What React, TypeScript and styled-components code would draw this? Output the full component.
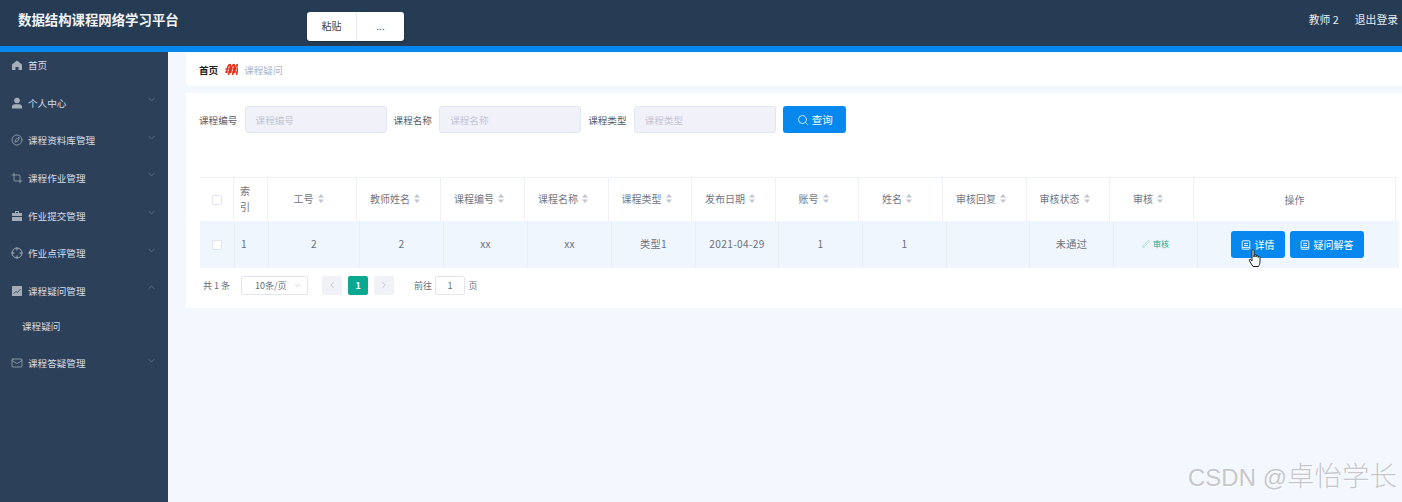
import React from "react";
import styled, { createGlobalStyle } from "styled-components";
import { ChevronDown, ChevronLeft, ChevronRight, ChevronUp, Compass, Crop, Mail, Pen, Search } from "lucide-react";

const GlobalStyle = createGlobalStyle`
  html, body {
    margin: 0;
    padding: 0;
    background: #f3f7fe;
  }
  body {
    font-family: "Noto Sans CJK SC", "Liberation Sans", sans-serif;
    overflow: hidden;
  }
`;

const Page = styled.div`
  position: relative;
  width: 1402px;
  height: 502px;
  overflow: hidden;
`;

const Header = styled.header`
  display: flex;
  align-items: flex-start;
  justify-content: space-between;
  height: 46px;
  padding: 0 4px 0 18px;
  background: #263c54;
  border-bottom: 6px solid #0688ee;
  color: #e6ecf2;
`;

const Title = styled.h1`
  margin: 9px 0 0;
  font-size: 13.4px;
  line-height: 20px;
  font-weight: 700;
  color: #f1f4f7;
`;

const UserBox = styled.div`
  display: flex;
  gap: 16px;
  margin-top: 11px;
  font-size: 10.8px;
  line-height: 16px;
`;

const PastePopup = styled.div`
  position: absolute;
  left: 307px;
  top: 12px;
  display: flex;
  width: 97px;
  height: 29px;
  background: #fff;
  border-radius: 3px;
  box-shadow: 0 1px 2px rgba(0, 0, 0, 0.25);
`;

const PasteItem = styled.div<{ $w: number; $line?: boolean }>`
  display: flex;
  align-items: center;
  justify-content: center;
  box-sizing: border-box;
  width: ${(p) => p.$w}px;
  padding-bottom: 2px;
  font-size: 10px;
  color: #444;
  border-right: ${(p) => (p.$line ? "1px solid #e8ebf2" : "none")};
`;

const Body = styled.div`
  display: flex;
  height: 450px;
`;

const Sidebar = styled.nav`
  flex: none;
  width: 168px;
  background: #2c4059;
  color: #d6dee7;
`;

const MenuItem = styled.div<{ $first?: boolean }>`
  display: flex;
  align-items: center;
  height: ${(p) => (p.$first ? 25 : 37.6)}px;
  margin-bottom: ${(p) => (p.$first ? 7 : 0)}px;
  padding: 0 11.5px 0 11px;
  font-size: 9.6px;
  svg.lead {
    flex: none;
    width: 12px;
    height: 12px;
    margin-right: 5px;
    color: #a4adb8;
  }
  svg.arrow {
    width: 11px;
    height: 11px;
    margin-left: auto;
    margin-top: -6px;
    color: #5f7186;
  }
`;

const SubItem = styled.div`
  display: flex;
  align-items: center;
  box-sizing: border-box;
  height: 35px;
  padding: 0 0 2px 22px;
  font-size: 9.6px;
`;

const Main = styled.main`
  flex: 1;
  min-width: 0;
  padding: 1px 0 0 18px;
`;

const Crumbs = styled.div`
  display: flex;
  align-items: center;
  gap: 6px;
  height: 33px;
  padding-left: 13px;
  background: #fff;
  border-radius: 0 0 0 4px;
  font-size: 9.6px;
`;

const CrumbHome = styled.span`
  color: #222;
  font-weight: 700;
`;

const CrumbCurrent = styled.span`
  color: #a9b4c8;
`;

const CrumbMark = styled.svg`
  width: 13px;
  height: 13px;
  margin-left: 1px;
`;

const Card = styled.section`
  height: 215px;
  margin-top: 7px;
  padding: 13px 3px 0 13px;
  background: #fff;
  box-sizing: border-box;
`;

const SearchRow = styled.div`
  display: flex;
  align-items: center;
  height: 27px;
`;

const Field = styled.label`
  display: flex;
  align-items: center;
  gap: 7.2px;
  margin-right: 7px;
  font-size: 9.6px;
  color: #555d6b;
`;

const FieldInput = styled.div`
  display: flex;
  align-items: center;
  box-sizing: border-box;
  width: 142px;
  height: 27px;
  padding-left: 10px;
  background: #f1f1f9;
  border: 1px solid #e3e6f3;
  border-radius: 3px;
  font-size: 9.6px;
  color: #c3c6d6;
`;

const PrimaryButton = styled.button`
  display: inline-flex;
  align-items: center;
  justify-content: center;
  gap: 3px;
  border: none;
  border-radius: 3px;
  background: #0688ee;
  color: #fff;
  font-family: inherit;
  font-size: 10px;
  padding: 0;
  svg {
    width: 12px;
    height: 12px;
  }
`;

const SearchButton = styled(PrimaryButton)`
  width: 63px;
  height: 27px;
  margin-left: 0.6px;
  font-size: 10.5px;
`;

const Table = styled.div`
  width: 1199px;
  margin: 44px 0 0 1px;
  font-size: 10px;
`;

const HeadRow = styled.div`
  display: grid;
  grid-template-columns: 34px 34px 89px 84px 84px 84px 83px 84px 83px 84px 84px 83px 84px 202px;
  height: 44px;
  border-top: 1px solid #eef1f8;
  box-sizing: border-box;
`;

const BodyRow = styled.div`
  display: grid;
  grid-template-columns: 35px 34px 91px 84px 84px 84px 84px 83px 84px 84px 83px 84px 84px 201px;
  height: 47px;
  background: #f0f6fe;
`;

const HeadCell = styled.div<{ $plain?: boolean }>`
  display: flex;
  align-items: center;
  justify-content: center;
  gap: 4px;
  box-sizing: border-box;
  padding: 0 ${(p) => (p.$plain ? 0 : 7)}px ${(p) => (p.$plain ? 1 : 3)}px 0;
  color: #6f7785;
  border-right: 1px solid #eef1f8;
`;

const IndexHead = styled(HeadCell)`
  justify-content: flex-start;
  padding: 0 0 1px 6px;
  line-height: 16px;
`;

const Cell = styled.div`
  display: flex;
  align-items: center;
  justify-content: center;
  padding-bottom: 2px;
  color: #6b7280;
  border-right: 1px solid #e8eff9;
  font-size: 10.2px;
  letter-spacing: 0.3px;
`;

const IndexCell = styled(Cell)`
  justify-content: flex-start;
  padding-left: 6px;
`;

const ActionCell = styled(Cell)`
  gap: 5px;
  border-right: none;
  padding: 0 3px 0 0;
  letter-spacing: 0;
`;

const Box = styled.span`
  display: block;
  box-sizing: border-box;
  width: 10px;
  height: 10px;
  margin-top: 2px;
  background: #fff;
  border: 1px solid #e3e6ef;
  border-radius: 1px;
`;

const Sort = styled.svg`
  width: 6px;
  height: 9px;
  flex: none;
`;

const AuditLink = styled.span`
  display: inline-flex;
  align-items: center;
  gap: 3px;
  font-size: 8px;
  letter-spacing: 0;
  color: #1aa88f;
  svg {
    width: 8px;
    height: 8px;
    color: #6fc9b8;
  }
`;

const RowButton = styled(PrimaryButton)<{ $w: number }>`
  width: ${(p) => p.$w}px;
  height: 27px;
  gap: 4px;
  svg {
    width: 10px;
    height: 10px;
  }
`;

const Pager = styled.div`
  display: flex;
  align-items: center;
  height: 20px;
  margin-top: 7px;
  padding-left: 3px;
  font-size: 9px;
  color: #666e7c;
`;

const PageSelect = styled.div`
  display: flex;
  align-items: center;
  justify-content: space-between;
  box-sizing: border-box;
  width: 67px;
  height: 19px;
  margin: 0 14px 0 11px;
  padding: 0 5px 0 13px;
  border: 1px solid #e3e6ef;
  border-radius: 2px;
  svg {
    width: 9px;
    height: 9px;
    color: #c3c8d2;
  }
`;

const PageButton = styled.div<{ $active?: boolean }>`
  display: flex;
  align-items: center;
  justify-content: center;
  width: 20px;
  height: 19px;
  margin-right: 6px;
  border-radius: 2px;
  font-weight: 700;
  background: ${(p) => (p.$active ? "#0aa98f" : "#f0f2f8")};
  color: ${(p) => (p.$active ? "#fff" : "#b9bfcc")};
  svg {
    width: 10px;
    height: 10px;
  }
`;

const JumpLabel = styled.span`
  margin-left: 14px;
`;

const JumpInput = styled.div`
  display: flex;
  align-items: center;
  justify-content: center;
  box-sizing: border-box;
  width: 30px;
  height: 19px;
  margin: 0 3.5px 0 3px;
  border: 1px solid #e3e6ef;
  border-radius: 2px;
`;

const Watermark = styled.div`
  position: absolute;
  right: 5px;
  top: 456px;
  display: flex;
  align-items: baseline;
  font-family: "Liberation Sans", "Noto Sans CJK SC", sans-serif;
  font-size: 24px;
  line-height: 36px;
  color: rgba(165, 165, 168, 0.6);
  text-shadow: 1px 1px 1px rgba(255, 255, 255, 0.9);
  white-space: pre;
`;

const WatermarkName = styled.span`
  font-family: "Noto Sans CJK SC", sans-serif;
  font-size: 27.5px;
  font-weight: 300;
`;

const HandCursor = styled.svg`
  position: absolute;
  left: 1248px;
  top: 249px;
  width: 14px;
  height: 20px;
`;

const SortIcon = () => (
  <Sort viewBox="0 0 6 9">
    <path d="M3 0 6 3.4H0Z" fill="#c0c6d2" />
    <path d="M3 9 0 5.6H6Z" fill="#c0c6d2" />
  </Sort>
);

const HomeIcon = () => (
  <svg className="lead" viewBox="0 0 12 12" fill="#a4adb8">
    <path d="M6 1.500 11 5.500V11H7.500V8h-3v3H1V5.500Z" />
  </svg>
);

const PersonIcon = () => (
  <svg className="lead" viewBox="0 0 12 12" fill="#a4adb8">
    <circle cx="6" cy="3.500" r="2.800" />
    <path d="M1 11.500V9.500C1 7.800 2.500 7.200 6 7.200s5 .6 5 2.300v2Z" />
  </svg>
);

const CaseIcon = () => (
  <svg className="lead" viewBox="0 0 12 12" fill="#a4adb8">
    <path d="M4 1h4v2H7V2H5v1H4Z" />
    <path d="M1 3h10v3H1ZM1 7h10v4H1Z" />
  </svg>
);

const DataIcon = () => (
  <svg className="lead" viewBox="0 0 12 12">
    <rect x="1" y="1" width="10" height="10" rx="0.5" fill="#a4adb8" />
    <path d="M2.500 8.500 5 6.500l1.500 1L9.500 4" stroke="#2c4059" strokeWidth="0.8" fill="none" />
  </svg>
);

const AimIcon = () => (
  <svg className="lead" viewBox="0 0 12 12" fill="none" stroke="#a4adb8" strokeWidth="1">
    <circle cx="6" cy="6" r="5" />
    <path d="M6 .5v3M6 8.500v3M.5 6h3M8.500 6h3" />
  </svg>
);

const DocIcon = () => (
  <svg viewBox="0 0 10 10" fill="none" stroke="#fff" strokeWidth="0.9">
    <rect x="1.200" y="0.800" width="7.600" height="8.400" rx="0.600" />
    <path d="M3 3.400h4M3 5.400h4M1.200 7.400h7.600" />
  </svg>
);

const menu: { label: string; icon: React.ReactNode; open?: boolean }[] = [
  { label: "个人中心", icon: <PersonIcon /> },
  { label: "课程资料库管理", icon: <Compass className="lead" strokeWidth={1.5} /> },
  { label: "课程作业管理", icon: <Crop className="lead" strokeWidth={1.5} /> },
  { label: "作业提交管理", icon: <CaseIcon /> },
  { label: "作业点评管理", icon: <AimIcon /> },
  { label: "课程疑问管理", icon: <DataIcon />, open: true },
];

const headers = ["工号", "教师姓名", "课程编号", "课程名称", "课程类型", "发布日期", "账号", "姓名", "审核回复", "审核状态", "审核"];
const values = ["2", "2", "xx", "xx", "类型1", "2021-04-29", "1", "1", "", "未通过"];
const fields = ["课程编号", "课程名称", "课程类型"];

export default function App() {
  return (
    <Page>
      <GlobalStyle />
      <Header>
        <Title>数据结构课程网络学习平台</Title>
        <UserBox>
          <span>教师 2</span>
          <span>退出登录</span>
        </UserBox>
      </Header>
      <PastePopup>
        <PasteItem $w={50} $line>粘贴</PasteItem>
        <PasteItem $w={47}>...</PasteItem>
      </PastePopup>
      <Body>
        <Sidebar>
          <MenuItem $first>
            <HomeIcon />
            首页
          </MenuItem>
          {menu.map((m) => (
            <MenuItem key={m.label}>
              {m.icon}
              {m.label}
              {m.open ? <ChevronUp className="arrow" /> : <ChevronDown className="arrow" />}
            </MenuItem>
          ))}
          <SubItem>课程疑问</SubItem>
          <MenuItem>
            <Mail className="lead" strokeWidth={1.5} />
            课程答疑管理
            <ChevronDown className="arrow" />
          </MenuItem>
        </Sidebar>
        <Main>
          <Crumbs>
            <CrumbHome>首页</CrumbHome>
            <CrumbMark viewBox="0 0 13 13" fill="none" stroke="#e2301c" strokeWidth="1.500">
              <path d="M1 10c1-1 1-3 1.500-5S4 1.500 5 1.500 4.500 8 3.500 12M5 10c1-1 1-3 1.500-5S8 1.500 9 1.500 8.500 8 7.500 12M9 10c1-1 1-3 1.500-5S12 1.500 13 1.500 12.500 8 11.500 12" />
              <path d="M0 6h13M0 9h12" strokeWidth="1.200" />
            </CrumbMark>
            <CrumbCurrent>课程疑问</CrumbCurrent>
          </Crumbs>
          <Card>
            <SearchRow>
              {fields.map((f) => (
                <Field key={f}>
                  {f}
                  <FieldInput>{f}</FieldInput>
                </Field>
              ))}
              <SearchButton>
                <Search strokeWidth={1.5} />
                查询
              </SearchButton>
            </SearchRow>
            <Table>
              <HeadRow>
                <HeadCell $plain><Box /></HeadCell>
                <IndexHead>索<br />引</IndexHead>
                {headers.map((h) => (
                  <HeadCell key={h}>
                    {h}
                    <SortIcon />
                  </HeadCell>
                ))}
                <HeadCell $plain>操作</HeadCell>
              </HeadRow>
              <BodyRow>
                <Cell><Box /></Cell>
                <IndexCell>1</IndexCell>
                {values.map((v, i) => (
                  <Cell key={i}>{v}</Cell>
                ))}
                <Cell>
                  <AuditLink>
                    <Pen strokeWidth={1.5} />
                    审核
                  </AuditLink>
                </Cell>
                <ActionCell>
                  <RowButton $w={54}><DocIcon />详情</RowButton>
                  <RowButton $w={74}><DocIcon />疑问解答</RowButton>
                </ActionCell>
              </BodyRow>
              <Pager>
                共 1 条
                <PageSelect>
                  10条/页
                  <ChevronDown />
                </PageSelect>
                <PageButton><ChevronLeft /></PageButton>
                <PageButton $active>1</PageButton>
                <PageButton><ChevronRight /></PageButton>
                <JumpLabel>前往</JumpLabel>
                <JumpInput>1</JumpInput>
                页
              </Pager>
            </Table>
          </Card>
        </Main>
      </Body>
      <HandCursor viewBox="0 0 14 20">
        <path
          d="M4 1.500c0-1 2-1 2 0V8l.2-1.600c0-1 1.800-1 1.800 0V8l.2-1c0-1 1.800-1 1.800 0v1.500l.2-.5c.2-1 1.800-.7 1.800.4V13c0 2-1 3-1.500 4.500H5L1.500 12c-.8-1.200.6-2.300 1.500-1.300L4 12Z"
          fill="#fff"
          stroke="#222"
          strokeWidth="1"
        />
      </HandCursor>
      <Watermark>
        CSDN @<WatermarkName>卓怡学长</WatermarkName>
      </Watermark>
    </Page>
  );
}
